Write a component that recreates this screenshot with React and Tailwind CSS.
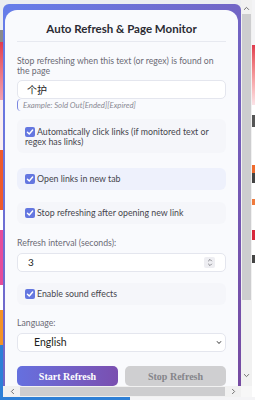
const Check = () => (
  <span className="inline-flex items-center justify-center w-[10px] h-[10px] rounded-[2px] bg-[#6477e0] align-[-1px] mr-[2px]">
    <svg width="8" height="8" viewBox="0 0 10 10">
      <path d="M1.8 5.2 L4.1 7.4 L8.3 2.6" fill="none" stroke="white" strokeWidth="1.8" strokeLinecap="round" strokeLinejoin="round" />
    </svg>
  </span>
);

const Chev = ({ d, cls = "" }) => (
  <svg width="7" height="7" viewBox="0 0 8 8" className={cls}>
    <path d={d} fill="none" stroke="#6b6b6b" strokeWidth="1.1" strokeLinecap="round" strokeLinejoin="round" />
  </svg>
);

export default function App() {
  return (
    <div className="w-[255px] h-[400px] overflow-hidden bg-white flex flex-col font-['Lato',sans-serif]">
      <div className="flex h-[397px]">
        {/* left page strip */}
        <div className="w-[3px] flex flex-col">
          <div className="h-[30px] bg-[#eceef1]" />
          <div className="h-[12px] bg-[#8a8a8a]" />
          <div className="h-[58px] bg-gradient-to-b from-[#e23a4e] to-[#f2a0b0]" />
          <div className="h-[50px] bg-[#fbeef0]" />
          <div className="h-[60px] bg-[#ee5a2c]" />
          <div className="h-[20px] bg-white" />
          <div className="h-[55px] bg-[#e64c9a]" />
          <div className="h-[25px] bg-white" />
          <div className="h-[35px] bg-[#f39226]" />
          <div className="flex-1 bg-[#2d7fd6]" />
        </div>
        {/* popup + scrollbars */}
        <div className="w-[249px] flex flex-col">
          <div className="flex h-[386px]">
            <div className="w-[238px] flex flex-col bg-[#eceef1] pt-[4px]">
              <div className="flex-1 min-h-0 rounded-t-[6px] bg-gradient-to-br from-[#667eea] to-[#764ba2] pt-[6px] pl-[2px] pr-[3px] flex flex-col">
                <div className="flex-1 min-h-0 overflow-hidden rounded-t-[12px] bg-[#f9fafd] pl-[12px] pr-[12px] pt-[10px]">
                  <div className="pb-[4px] border-b border-[#e7e9f0] text-center text-[11.5px] leading-[17px] font-bold text-[#2b2b33]">
                    Auto Refresh &amp; Page Monitor
                  </div>
                  <div className="mt-[14px] text-[8.7px] leading-[10px] text-[#6b6b75]">
                    Stop refreshing when this text (or regex) is found on the page
                  </div>
                  <div className="mt-[4px] h-[19px] rounded-[5px] bg-white border border-[#e4e6ee] flex items-center pl-[9px] text-[10px] text-[#222] font-['Noto_Sans_CJK_SC',sans-serif]">
                    个护
                  </div>
                  <div className="h-[12px] border-l-[1.5px] border-[#7b86e0] rounded-l-[4px] pl-[5px] text-[7.8px] leading-[12px] italic text-[#8a8a94]">
                    Example: Sold Out[Ended][Expired]
                  </div>
                  <div className="mt-[8px] rounded-[6px] bg-[#f5f6fa] pl-[8px] pr-[6px] pt-[8px] pb-[6px] text-[8.8px] leading-[10px] text-[#45454d]">
                    <Check />Automatically click links (if monitored text or regex has links)
                  </div>
                  <div className="mt-[15px] rounded-[6px] bg-[#eef1fc] pl-[8px] py-[6px] text-[8.8px] leading-[10px] text-[#45454d]">
                    <Check />Open links in new tab
                  </div>
                  <div className="mt-[12px] rounded-[6px] bg-[#f5f6fa] pl-[8px] py-[6px] text-[8.8px] leading-[10px] text-[#45454d]">
                    <Check />Stop refreshing after opening new link
                  </div>
                  <div className="mt-[14px] text-[8.7px] leading-[10px] text-[#6b6b75]">
                    Refresh interval (seconds):
                  </div>
                  <div className="mt-[5px] h-[19px] rounded-[5px] bg-white border border-[#e4e6ee] flex items-center pl-[10px] pr-[10px] text-[10px] text-[#222]">
                    <span className="flex-1">3</span>
                    <span className="w-[11px] h-[11px] rounded-[2px] bg-[#eeeef2] flex flex-col items-center justify-center">
                      <svg width="6" height="9" viewBox="0 0 6 9">
                        <path d="M1.2 3.2 L3 1.4 L4.8 3.2 M1.2 5.8 L3 7.6 L4.8 5.8" fill="none" stroke="#7a7a80" strokeWidth="0.9" />
                      </svg>
                    </span>
                  </div>
                  <div className="mt-[11px] rounded-[6px] bg-[#f5f6fa] pl-[8px] py-[6px] text-[8.8px] leading-[10px] text-[#45454d]">
                    <Check />Enable sound effects
                  </div>
                  <div className="mt-[13px] text-[8.7px] leading-[10px] text-[#6b6b75]">
                    Language:
                  </div>
                  <div className="mt-[5px] h-[19px] rounded-[5px] bg-white border border-[#e4e6ee] flex items-center pl-[16px] pr-[3px] text-[10.5px] text-[#1e1e22]">
                    <span className="flex-1">English</span>
                    <svg width="6" height="5" viewBox="0 0 6 5">
                      <path d="M1 1.3 L3 3.5 L5 1.3" fill="none" stroke="#333" strokeWidth="1" />
                    </svg>
                  </div>
                  <div className="mt-[14px] flex gap-[7px] font-['Liberation_Serif',serif] font-bold text-[10px]">
                    <div className="flex-1 h-[20px] rounded-[5px] bg-gradient-to-r from-[#6570df] to-[#7a4fb0] text-white flex items-center justify-center">
                      Start Refresh
                    </div>
                    <div className="flex-1 h-[20px] rounded-[5px] bg-[#cfcfd1] text-[#85858a] flex items-center justify-center">
                      Stop Refresh
                    </div>
                  </div>
                </div>
              </div>
            </div>
            {/* vertical scrollbar */}
            <div className="w-[11px] flex flex-col bg-[#f1f1f1]">
              <div className="h-[14px] flex items-end justify-center pb-[2px]">
                <Chev d="M1.5 5.2 L4 2.7 L6.5 5.2" />
              </div>
              <div className="mx-[1px] h-[286px] bg-[#cdcdcf]" />
              <div className="flex-1" />
              <div className="h-[14px] flex items-start justify-center">
                <Chev d="M1.5 2.8 L4 5.3 L6.5 2.8" />
              </div>
            </div>
          </div>
          {/* horizontal scrollbar */}
          <div className="h-[11px] flex bg-[#f1f1f1]">
            <div className="w-[17px] flex items-center justify-center pl-[2px]">
              <Chev d="M5.2 1.5 L2.7 4 L5.2 6.5" />
            </div>
            <div className="w-[205px] my-[1px] bg-[#cdcdcf]" />
            <div className="w-[16px] flex items-center justify-center">
              <Chev d="M2.8 1.5 L5.3 4 L2.8 6.5" />
            </div>
            <div className="flex-1 bg-[#f7f7f7]" />
          </div>
        </div>
        {/* right page strip */}
        <div className="w-[3px] flex flex-col bg-white">
          <div className="h-[45px] bg-[#f4f4f6]" />
          <div className="h-[60px] bg-gradient-to-b from-[#e03a4e] to-[#fbe3e7]" />
          <div className="h-[10px]" />
          <div className="h-[12px] bg-[#555]" />
          <div className="h-[38px]" />
          <div className="h-[8px] bg-[#ef6a2c]" />
          <div className="h-[10px] bg-[#444]" />
          <div className="h-[16px]" />
          <div className="h-[6px] bg-[#ef7a3c]" />
          <div className="h-[25px]" />
          <div className="h-[10px] bg-[#d8283c]" />
          <div className="h-[15px]" />
          <div className="h-[8px] bg-[#444]" />
        </div>
      </div>
      <div className="h-[3px] flex">
        <div className="w-[130px] bg-[#2d7fd6]" />
        <div className="flex-1 bg-[#f4f4f6]" />
      </div>
    </div>
  );
}
